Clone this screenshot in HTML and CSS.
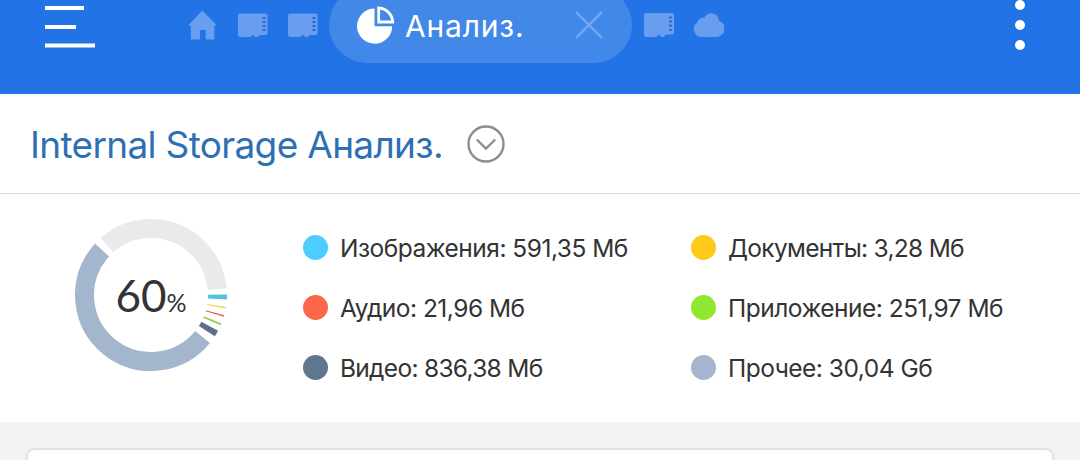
FILE: index.html
```
<!DOCTYPE html>
<html lang="ru">
<head>
  <meta charset="UTF-8">
  <title>Анализ</title>
  <link rel="stylesheet" href="styles.css">
</head>
<body>
  <header class="topbar">
    <svg class="menu-icon" width="50" height="48" viewBox="0 0 50 48">
      <path d="M0 8h39M0 27h31M0 45.5h50" stroke="#fff" stroke-width="4"/>
    </svg>

    <nav class="tabs">
      <svg class="tab-icon" width="30" height="30" viewBox="0 0 30 30">
        <path d="M14.300 0.500L29 15.500H26.300V29.500H17.600V20H12V29.500H2.800V15.500H0z"/>
      </svg>
      <svg class="tab-icon" width="30" height="30" viewBox="0 0 30 30">
        <path d="M2 3.500H27.500a2 2 0 0 1 2 2V23a2 2 0 0 1-2 2H22c-1 0-1 2-2.500 2h-2c-1.500 0-1-2-2.500-2s-1.500 2-3 2H2a2 2 0 0 1-2-2V5.500a2 2 0 0 1 2-2z"/>
        <path class="pins" d="M24.500 8h3M24.500 12h3M24.500 16h3M24.500 20h3"/>
      </svg>
      <svg class="tab-icon" width="30" height="30" viewBox="0 0 30 30">
        <path d="M2 3.500H27.500a2 2 0 0 1 2 2V23a2 2 0 0 1-2 2H22c-1 0-1 2-2.500 2h-2c-1.500 0-1-2-2.500-2s-1.500 2-3 2H2a2 2 0 0 1-2-2V5.500a2 2 0 0 1 2-2z"/>
        <path class="pins" d="M24.500 8h3M24.500 12h3M24.500 16h3M24.500 20h3"/>
      </svg>

      <div class="tab-active">
        <svg width="38" height="38" viewBox="0 0 38 38">
          <path d="M17.500 2.500V20.200H35.200A17.600 17.600 0 1 1 17.500 2.500z" fill="#fff"/>
          <path d="M21.700 2A14.800 14.800 0 0 1 35.700 16H21.700z" fill="none" stroke="#fff" stroke-width="2.800"/>
        </svg>
        <span class="tab-label">Анализ.</span>
        <svg class="close-icon" width="28" height="28" viewBox="0 0 28 28">
          <path d="M1 1L27 27M27 1L1 27"/>
        </svg>
      </div>

      <svg class="tab-icon" width="30" height="30" viewBox="0 0 30 30">
        <path d="M2 3H28a2 2 0 0 1 2 2V22.500a2 2 0 0 1-2 2H22c-1 0-1 2.500-2.500 2.500h-2c-1.500 0-1-2.500-2.500-2.500s-1.500 2.500-3 2.500H2a2 2 0 0 1-2-2V5a2 2 0 0 1 2-2z"/>
        <path class="pins" d="M25 7.500h3M25 11.500h3M25 15.500h3M25 19.800h3"/>
      </svg>
      <svg class="tab-icon" width="30" height="30" viewBox="0 0 30 30">
        <path d="M8 27A8 8 0 0 1 3.300 12.500A5.800 5.800 0 0 1 10.200 8A7.600 7.600 0 0 1 24.800 10.600A8.400 8.400 0 0 1 22 27z"/>
      </svg>
    </nav>

    <svg class="more-icon" width="10" height="50" viewBox="0 0 10 50">
      <circle cx="5" cy="5" r="5"/>
      <circle cx="5" cy="25" r="5"/>
      <circle cx="5" cy="45" r="5"/>
    </svg>
  </header>

  <div class="heading">
    <h1>Internal Storage Анализ.</h1>
    <svg width="38" height="38" viewBox="0 0 38 38">
      <circle cx="19" cy="19" r="17.500"/>
      <path d="M9.800 14.500L19 23.500L28.200 14.500"/>
    </svg>
  </div>

  <section class="summary">
    <div class="chart">
      <!-- every circle is 360 units long, so dashes are degrees -->
      <svg width="152" height="152" viewBox="0 0 152 152">
        <circle cx="76" cy="76" r="66.500" pathLength="360" stroke="#e9eaec" stroke-dasharray="126.500 233.500" transform="rotate(-131.500 76 76)"/>
        <circle cx="76" cy="76" r="66.500" pathLength="360" stroke="#53c3da" stroke-dasharray="3.800 356.200" transform="rotate(-0.300 76 76)"/>
        <circle cx="76" cy="76" r="66.500" pathLength="360" stroke="#ead552" stroke-dasharray="1.200 358.800" transform="rotate(9 76 76)"/>
        <circle cx="76" cy="76" r="66.500" pathLength="360" stroke="#dc6461" stroke-dasharray="1.200 358.800" transform="rotate(15.400 76 76)"/>
        <circle cx="76" cy="76" r="66.500" pathLength="360" stroke="#9acb45" stroke-dasharray="1.500 358.500" transform="rotate(22 76 76)"/>
        <circle cx="76" cy="76" r="66.500" pathLength="360" stroke="#5b7189" stroke-dasharray="5 355" transform="rotate(28 76 76)"/>
        <circle cx="76" cy="76" r="66.500" pathLength="360" stroke="#a4b6cd" stroke-dasharray="183.500 176.500" transform="rotate(39.200 76 76)"/>
      </svg>
      <div class="percent"><span class="value">60</span><span class="sign">%</span></div>
    </div>

    <ul class="legend">
      <li><i class="dot images"></i><span>Изображения: 591,35 Мб</span></li>
      <li><i class="dot docs"></i><span class="tight">Документы: 3,28 Мб</span></li>
      <li><i class="dot audio"></i><span>Аудио: 21,96 Мб</span></li>
      <li><i class="dot apps"></i><span>Приложение: 251,97 Мб</span></li>
      <li><i class="dot video"></i><span class="tight">Видео: 836,38 Мб</span></li>
      <li><i class="dot other"></i><span>Прочее: 30,04 Gб</span></li>
    </ul>
  </section>

  <main class="content">
    <div class="card"></div>
  </main>
</body>
</html>
```
FILE: styles.css
```
* {
  box-sizing: border-box;
}
body {
  margin: 0;
  background-color: #fff;
  color: #333;
  font-family: 'Inter', 'Roboto', sans-serif;
}
svg {
  display: block;
  flex-shrink: 0;
}
.topbar {
  display: flex;
  align-items: flex-start;
  height: 94px;
  padding: 0 55px 0 45px;
  background-color: #2273e6;
}
.tabs {
  display: flex;
  align-items: center;
  gap: 20px;
  height: 76px;
  margin: -13px 0 0 93px;
}
.tab-icon {
  fill: #689df0;
}
.tab-icon .pins {
  stroke: #2b6cc8;
  stroke-width: 1.8;
}
.tab-active {
  display: flex;
  align-items: center;
  width: 303px;
  height: 76px;
  margin: 0 -8px 0 -9px;
  padding: 0 29px 0 28px;
  border-radius: 38px;
  background-color: #4288e8;
}
.tab-label {
  margin-left: 10px;
  color: #fff;
  font-size: 30px;
  line-height: 38px;
  letter-spacing: 0.8px;
  padding-top: 1px;
}
.close-icon {
  margin-left: auto;
  stroke: #75a8f0;
  stroke-width: 2.4;
}
.more-icon {
  margin-left: auto;
  fill: #fff;
}
.heading {
  display: flex;
  align-items: center;
  height: 100px;
  padding: 0 30px;
  border-bottom: 1px solid #dadada;
}
.heading h1 {
  width: 437px;
  margin: 2px 0 0;
  color: #2d70b3;
  font-size: 37px;
  font-weight: 400;
  letter-spacing: -0.67px;
  white-space: nowrap;
}
.heading svg {
  fill: none;
  stroke: #8e8e8e;
  stroke-width: 2.4;
}
.summary {
  display: flex;
  height: 228px;
  padding: 25px 0 0 75px;
}
.chart {
  position: relative;
  width: 152px;
  height: 152px;
}
.chart circle {
  fill: none;
  stroke-width: 19;
}
.percent {
  position: absolute;
  inset: 0;
  display: flex;
  align-items: baseline;
  justify-content: center;
  line-height: 152px;
  font-family: 'Lato', sans-serif;
}
.percent .value {
  font-size: 44px;
}
.percent .sign {
  font-size: 25px;
}
.legend {
  display: grid;
  grid-template-columns: 388px 350px;
  grid-auto-rows: 60px;
  height: 180px;
  margin: -2px 0 0 76px;
  padding: 0;
  list-style: none;
  font-size: 24.5px;
  letter-spacing: -0.5px;
  white-space: nowrap;
}
.legend li {
  display: flex;
  align-items: center;
  gap: 12px;
}
.legend span {
  padding-top: 2px;
}
.legend .tight {
  letter-spacing: -0.7px;
}
.dot {
  width: 25px;
  height: 25px;
  border-radius: 50%;
}
.images {
  background-color: #4dcdfe;
}
.docs {
  background-color: #fdca1c;
}
.audio {
  background-color: #fc674b;
}
.apps {
  background-color: #90e72f;
}
.video {
  background-color: #60758e;
}
.other {
  background-color: #a4b5cd;
}
.content {
  height: 38px;
  padding: 26px 26px 0;
  background-color: #f3f3f3;
}
.card {
  height: 12px;
  border: 2px solid #e3e3e3;
  border-bottom: 0;
  border-radius: 8px 8px 0 0;
  background-color: #fff;
}
```
